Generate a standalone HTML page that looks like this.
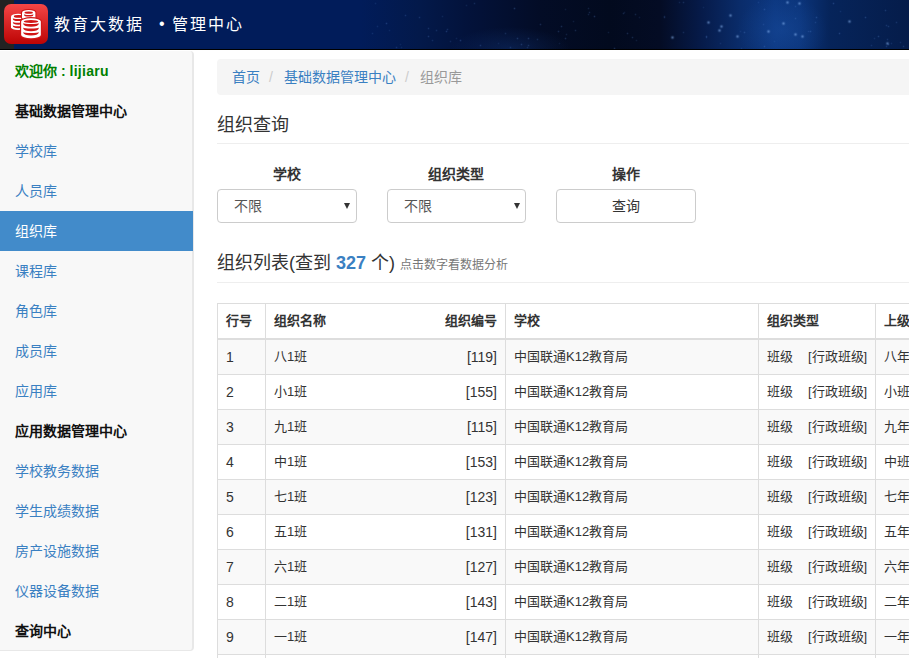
<!DOCTYPE html>
<html lang="zh-CN">
<head>
<meta charset="utf-8">
<style>
html,body{margin:0;padding:0;}
body{width:909px;height:658px;overflow:hidden;position:relative;background:#fff;font-family:"Liberation Sans",sans-serif;font-size:14px;color:#333;}
.abs{position:absolute;}
#hdr{left:0;top:0;width:909px;height:49px;overflow:hidden;background:radial-gradient(ellipse 45px 35px at 782px 30px,rgba(30,85,170,.35),rgba(30,85,170,0)),radial-gradient(ellipse 60px 22px at 510px 49px,rgba(20,60,130,.35),rgba(20,60,130,0)),linear-gradient(to right,#011c5a 0px,#011c5a 360px,#03194a 420px,#03123a 470px,#030c26 540px,#020a1e 610px,#040c24 660px,#061a48 700px,#0a2c6a 740px,#0c3780 775px,#0b347a 800px,#06245a 830px,#051c4a 909px);}
#stars{left:0;top:0;width:1px;height:1px;box-shadow:706px 36px 1.5px 0 rgba(110,160,240,0.53),878px 36px 1.5px 0 rgba(110,160,240,0.57),386px 23px 1.5px 0 rgba(110,160,240,0.58),720px 43px 1.5px 0 rgba(110,160,240,0.29),623px 13px 1.5px 0 rgba(110,160,240,0.44),679px 2px 1.5px 0 rgba(110,160,240,0.33),521px 44px 1.5px 0 rgba(110,160,240,0.52),456px 38px 1.5px 0 rgba(110,160,240,0.30),703px 7px 1.5px 0 rgba(110,160,240,0.25),840px 11px 1.5px 0 rgba(110,160,240,0.33),900px 42px 1.5px 0 rgba(110,160,240,0.35),888px 26px 1.5px 0 rgba(110,160,240,0.49),480px 45px 1.5px 0 rgba(110,160,240,0.49),891px 43px 1.5px 0 rgba(110,160,240,0.35),565px 9px 1.5px 0 rgba(110,160,240,0.30),405px 15px 1.5px 0 rgba(110,160,240,0.46),372px 33px 1.5px 0 rgba(110,160,240,0.37),537px 39px 1.5px 0 rgba(110,160,240,0.42),540px 24px 1.5px 0 rgba(110,160,240,0.50),401px 47px 1.5px 0 rgba(110,160,240,0.26),774px 41px 1.5px 0 rgba(110,160,240,0.26),795px 18px 1.5px 0 rgba(110,160,240,0.45),375px 3px 1.5px 0 rgba(110,160,240,0.31),885px 10px 1.5px 0 rgba(110,160,240,0.51),871px 45px 1.5px 0 rgba(110,160,240,0.37),561px 26px 1.5px 0 rgba(110,160,240,0.52),428px 36px 1.5px 0 rgba(110,160,240,0.53),833px 3px 1.5px 0 rgba(110,160,240,0.58),419px 17px 1.5px 0 rgba(110,160,240,0.46),865px 17px 1.5px 0 rgba(110,160,240,0.57),664px 16px 1.5px 0 rgba(110,160,240,0.36),466px 5px 1.5px 0 rgba(110,160,240,0.30),741px 48px 1.5px 0 rgba(110,160,240,0.31),396px 47px 1.5px 0 rgba(110,160,240,0.44),589px 12px 1.5px 0 rgba(110,160,240,0.46),815px 22px 1.5px 0 rgba(110,160,240,0.40),400px 44px 1.5px 0 rgba(110,160,240,0.26),636px 40px 1.5px 0 rgba(110,160,240,0.30),764px 46px 1.5px 0 rgba(110,160,240,0.47),795px 6px 1.5px 0 rgba(110,160,240,0.40),450px 41px 1.5px 0 rgba(110,160,240,0.35),614px 48px 1.5px 0 rgba(110,160,240,0.55),896px 22px 1.5px 0 rgba(110,160,240,0.42),763px 24px 1.5px 0 rgba(110,160,240,0.35),588px 8px 1.5px 0 rgba(110,160,240,0.38),903px 46px 1.5px 0 rgba(110,160,240,0.47),639px 17px 1.5px 0 rgba(110,160,240,0.28),517px 38px 1.5px 0 rgba(110,160,240,0.55),565px 38px 1.5px 0 rgba(110,160,240,0.52),744px 32px 1.5px 0 rgba(110,160,240,0.52),566px 34px 1.5px 0 rgba(110,160,240,0.35),632px 37px 1.5px 0 rgba(110,160,240,0.49),528px 45px 1.5px 0 rgba(110,160,240,0.48),683px 2px 1.5px 0 rgba(110,160,240,0.44),505px 33px 1.5px 0 rgba(110,160,240,0.41),810px 31px 1.5px 0 rgba(110,160,240,0.53),558px 31px 1.5px 0 rgba(110,160,240,0.51),816px 17px 1.5px 0 rgba(110,160,240,0.55),839px 33px 1.5px 0 rgba(110,160,240,0.59),886px 25px 1.5px 0 rgba(110,160,240,0.44),460px 40px 1.5px 0 rgba(110,160,240,0.58),627px 33px 1.5px 0 rgba(110,160,240,0.50),764px 9px 1.5px 0 rgba(110,160,240,0.52),683px 32px 1.5px 0 rgba(110,160,240,0.40),706px 37px 1.5px 0 rgba(110,160,240,0.47),758px 2px 1.5px 0 rgba(110,160,240,0.31),608px 32px 1.5px 0 rgba(110,160,240,0.33),740px 31px 1.5px 0 rgba(110,160,240,0.26),624px 12px 1.5px 0 rgba(110,160,240,0.27),442px 16px 1.5px 0 rgba(110,160,240,0.31),474px 3px 1.5px 0 rgba(110,160,240,0.41),575px 30px 1.5px 0 rgba(110,160,240,0.46),498px 43px 1.5px 0 rgba(110,160,240,0.25),588px 14px 1.5px 0 rgba(110,160,240,0.39),432px 40px 1.5px 0 rgba(110,160,240,0.38),389px 30px 1.5px 0 rgba(110,160,240,0.28),664px 17px 1.5px 0 rgba(110,160,240,0.45),887px 39px 1.5px 0 rgba(110,160,240,0.40),808px 31px 1.5px 0 rgba(110,160,240,0.38),447px 29px 1.5px 0 rgba(110,160,240,0.45),886px 46px 1.5px 0 rgba(110,160,240,0.46),559px 43px 1.5px 0 rgba(110,160,240,0.25),428px 28px 1.5px 0 rgba(110,160,240,0.47),446px 31px 1.5px 0 rgba(110,160,240,0.56),573px 21px 1.5px 0 rgba(110,160,240,0.33),527px 47px 1.5px 0 rgba(110,160,240,0.38),888px 44px 1.5px 0 rgba(110,160,240,0.46),510px 47px 1.5px 0 rgba(110,160,240,0.42),594px 16px 1.5px 0 rgba(110,160,240,0.59),635px 14px 1.5px 0 rgba(110,160,240,0.42),436px 30px 1.5px 0 rgba(110,160,240,0.41),528px 38px 1.5px 0 rgba(110,160,240,0.54),377px 26px 1.5px 0 rgba(110,160,240,0.35),874px 38px 1.5px 0 rgba(110,160,240,0.34),514px 8px 1.5px 0 rgba(110,160,240,0.60),719px 30px 1.5px .5px rgba(150,195,255,0.7),768px 31px 1.5px .5px rgba(150,195,255,0.7),802px 36px 1.5px .5px rgba(150,195,255,0.7),672px 37px 1.5px .5px rgba(150,195,255,0.7),721px 26px 1.5px .5px rgba(150,195,255,0.7),730px 15px 1.5px .5px rgba(150,195,255,0.7),783px 23px 1.5px .5px rgba(150,195,255,0.7),737px 36px 1.5px .5px rgba(150,195,255,0.7),799px 3px 1.5px .5px rgba(150,195,255,0.7),708px 22px 1.5px .5px rgba(150,195,255,0.7),887px 43px 1.5px .5px rgba(150,195,255,0.7),787px 2px 1.5px .5px rgba(150,195,255,0.7),849px 21px 1.5px .5px rgba(150,195,255,0.7),795px 34px 1.5px .5px rgba(150,195,255,0.7);}
#hdr .strip{left:0;top:0;width:14px;height:49px;background:#222;}
#hdrline{left:0;top:49px;width:909px;height:1px;background:#000;}
#logo{left:4px;top:4px;width:44px;height:40px;}
#dot{left:159px;top:12px;color:#fff;font-size:16px;line-height:24px;}
#title2{left:172px;top:13px;color:#fff;font-family:"Liberation Serif",serif;font-weight:300;font-size:16px;letter-spacing:2px;line-height:24px;white-space:nowrap;}
#title{left:54px;top:13px;color:#fff;font-family:"Liberation Serif",serif;font-weight:300;font-size:16px;letter-spacing:2px;line-height:24px;white-space:nowrap;}
#side{left:-1px;top:51px;width:193px;height:599px;background:#f8f8f8;border-right:2px solid #e8e8e8;border-bottom:1px solid #e8e8e8;border-radius:0 4px 4px 0;}
.si{position:absolute;left:0;width:193px;height:40px;line-height:40px;padding-left:16px;box-sizing:border-box;white-space:nowrap;color:#3a80c2;}
.si.b{color:#111;font-weight:bold;}
.si.g{color:#008000;font-weight:bold;}
.si.act{background:#428bca;color:#fff;width:194px;}
#bc{left:217px;top:59px;width:720px;height:36px;background:#f5f5f5;border-radius:4px;line-height:36px;padding-left:15px;box-sizing:border-box;white-space:nowrap;}
#bc a{color:#3a80c2;text-decoration:none;}
#bc .sep{color:#ccc;padding:0 11px 0 9px;}
#bc .cur{color:#999;}
#h1{left:217px;top:112px;font-size:18px;line-height:26px;white-space:nowrap;color:#333;}
.hr{position:absolute;left:217px;width:700px;height:1px;background:#eee;}
.lbl{position:absolute;top:164px;width:140px;text-align:center;font-weight:bold;line-height:20px;color:#333;}
.sel{position:absolute;top:189px;width:140px;height:34px;box-sizing:border-box;border:1px solid #ccc;border-radius:4px;background:#fff;}
.sel .t{position:absolute;left:16px;top:0;line-height:32px;color:#555;}
.sel .arr{position:absolute;left:126px;top:13px;width:0;height:0;border-left:3.5px solid transparent;border-right:3.5px solid transparent;border-top:6px solid #333;}
.btn{position:absolute;top:189px;width:140px;height:34px;box-sizing:border-box;border:1px solid #ccc;border-radius:4px;background:#fff;text-align:center;line-height:32px;color:#333;}
#h2{left:217px;top:250px;font-size:18px;line-height:26px;white-space:nowrap;color:#333;}
#h2 b{color:#3a80c2;}
#h2 small{font-size:12px;color:#777;}
table{position:absolute;left:217px;top:303px;border-collapse:collapse;table-layout:fixed;width:760px;}
td,th{border:1px solid #ddd;padding:0 8px;height:34px;line-height:20px;font-size:13px;white-space:nowrap;overflow:hidden;text-align:left;}
th{border-bottom:2px solid #ddd;font-weight:bold;color:#333;}
tbody tr:nth-child(odd) td{background:#f9f9f9;}
.r{float:right;}
td .r,tbody td:first-child{font-size:14px;}
.g2{margin-left:15px;}
</style>
</head>
<body>
<div id="hdr" class="abs">
  <div class="abs strip"></div><div id="stars" class="abs"></div>
</div>
<div id="hdrline" class="abs"></div>
<div id="logo" class="abs"><svg width="44" height="40" viewBox="0 0 44 40" style="position:absolute;left:0;top:0"><defs><linearGradient id="lg" x1="0" y1="0" x2="0" y2="1"><stop offset="0" stop-color="#f44646"/><stop offset="1" stop-color="#bd0404"/></linearGradient></defs><rect width="44" height="40" rx="7" fill="url(#lg)"/><path d="M7.00,12.50 A7.20,2.80 0 0 1 21.40,12.50 L21.40,23.20 A7.20,2.80 0 0 1 7.00,23.20 Z" fill="#fff"/><ellipse cx="14.60" cy="12.40" rx="4.80" ry="1.30" fill="#d11616"/><path d="M8.90,14.00 A5.30,1.05 0 0 0 19.50,14.00 L19.50,14.90 A5.30,2.05 0 0 1 8.90,14.90 Z" fill="#d11616"/><path d="M8.90,17.70 A5.30,1.05 0 0 0 19.50,17.70 L19.50,18.60 A5.30,2.05 0 0 1 8.90,18.60 Z" fill="#d11616"/><path d="M8.90,21.20 A5.30,1.05 0 0 0 19.50,21.20 L19.50,22.10 A5.30,2.05 0 0 1 8.90,22.10 Z" fill="#d11616"/><path d="M18.00,8.70 A6.70,2.60 0 0 1 31.40,8.70 L31.40,13.50 A6.70,2.60 0 0 1 18.00,13.50 Z" fill="#d11616" stroke="#d11616" stroke-width="2.2"/><path d="M18.00,8.70 A6.70,2.60 0 0 1 31.40,8.70 L31.40,13.50 A6.70,2.60 0 0 1 18.00,13.50 Z" fill="#fff"/><ellipse cx="24.70" cy="8.70" rx="4.20" ry="1.10" fill="#d11616"/><path d="M20.10,10.00 A4.60,1.10 0 0 0 29.30,10.00 L29.30,10.90 A4.60,1.60 0 0 1 20.10,10.90 Z" fill="#d11616"/><path d="M17.15,17.60 A9.85,3.30 0 0 1 36.85,17.60 L36.85,31.00 A9.85,3.30 0 0 1 17.15,31.00 Z" fill="#d11616" stroke="#d11616" stroke-width="2.4"/><path d="M17.15,17.60 A9.85,3.30 0 0 1 36.85,17.60 L36.85,31.00 A9.85,3.30 0 0 1 17.15,31.00 Z" fill="#fff"/><ellipse cx="27.00" cy="17.50" rx="7.30" ry="1.50" fill="#d11616"/><path d="M19.30,19.00 A7.70,1.10 0 0 0 34.70,19.00 L34.70,19.90 A7.70,2.80 0 0 1 19.30,19.90 Z" fill="#d11616"/><path d="M19.30,23.50 A7.70,1.10 0 0 0 34.70,23.50 L34.70,24.40 A7.70,2.80 0 0 1 19.30,24.40 Z" fill="#d11616"/><path d="M19.30,27.90 A7.70,1.10 0 0 0 34.70,27.90 L34.70,28.80 A7.70,2.80 0 0 1 19.30,28.80 Z" fill="#d11616"/></svg></div>
<div id="title" class="abs">教育大数据</div><div id="dot" class="abs">•</div><div id="title2" class="abs">管理中心</div>

<div id="side" class="abs">
  <div class="si g" style="top:0">欢迎你 : <span style="letter-spacing:.3px">lijiaru</span></div>
  <div class="si b" style="top:40px">基础数据管理中心</div>
  <div class="si" style="top:80px">学校库</div>
  <div class="si" style="top:120px">人员库</div>
  <div class="si act" style="top:160px">组织库</div>
  <div class="si" style="top:200px">课程库</div>
  <div class="si" style="top:240px">角色库</div>
  <div class="si" style="top:280px">成员库</div>
  <div class="si" style="top:320px">应用库</div>
  <div class="si b" style="top:360px">应用数据管理中心</div>
  <div class="si" style="top:400px">学校教务数据</div>
  <div class="si" style="top:440px">学生成绩数据</div>
  <div class="si" style="top:480px">房产设施数据</div>
  <div class="si" style="top:520px">仪器设备数据</div>
  <div class="si b" style="top:560px">查询中心</div>
</div>

<div id="bc" class="abs"><a>首页</a><span class="sep">/</span><a>基础数据管理中心</a><span class="sep">/</span><span class="cur">组织库</span></div>
<div id="h1" class="abs">组织查询</div>
<div class="hr" style="top:143px"></div>

<div class="lbl" style="left:217px">学校</div>
<div class="lbl" style="left:386px">组织类型</div>
<div class="lbl" style="left:556px">操作</div>
<div class="sel" style="left:217px"><span class="t">不限</span><span class="arr"></span></div>
<div class="sel" style="left:387px;width:139px"><span class="t">不限</span><span class="arr"></span></div>
<div class="btn" style="left:556px">查询</div>

<div id="h2" class="abs">组织列表(查到 <b>327</b> 个) <small>点击数字看数据分析</small></div>
<div class="hr" style="top:282px"></div>

<table>
<colgroup><col style="width:48px"><col style="width:240px"><col style="width:253px"><col style="width:117px"><col style="width:102px"></colgroup>
<thead><tr><th>行号</th><th>组织名称<span class="r">组织编号</span></th><th>学校</th><th>组织类型</th><th>上级组织</th></tr></thead>
<tbody>
<tr><td>1</td><td>八1班<span class="r">[119]</span></td><td>中国联通K12教育局</td><td>班级<span class="g2">[行政班级]</span></td><td>八年级</td></tr>
<tr><td>2</td><td>小1班<span class="r">[155]</span></td><td>中国联通K12教育局</td><td>班级<span class="g2">[行政班级]</span></td><td>小班</td></tr>
<tr><td>3</td><td>九1班<span class="r">[115]</span></td><td>中国联通K12教育局</td><td>班级<span class="g2">[行政班级]</span></td><td>九年级</td></tr>
<tr><td>4</td><td>中1班<span class="r">[153]</span></td><td>中国联通K12教育局</td><td>班级<span class="g2">[行政班级]</span></td><td>中班</td></tr>
<tr><td>5</td><td>七1班<span class="r">[123]</span></td><td>中国联通K12教育局</td><td>班级<span class="g2">[行政班级]</span></td><td>七年级</td></tr>
<tr><td>6</td><td>五1班<span class="r">[131]</span></td><td>中国联通K12教育局</td><td>班级<span class="g2">[行政班级]</span></td><td>五年级</td></tr>
<tr><td>7</td><td>六1班<span class="r">[127]</span></td><td>中国联通K12教育局</td><td>班级<span class="g2">[行政班级]</span></td><td>六年级</td></tr>
<tr><td>8</td><td>二1班<span class="r">[143]</span></td><td>中国联通K12教育局</td><td>班级<span class="g2">[行政班级]</span></td><td>二年级</td></tr>
<tr><td>9</td><td>一1班<span class="r">[147]</span></td><td>中国联通K12教育局</td><td>班级<span class="g2">[行政班级]</span></td><td>一年级</td></tr>
<tr><td>10</td><td>三1班<span class="r">[139]</span></td><td>中国联通K12教育局</td><td>班级<span class="g2">[行政班级]</span></td><td>三年级</td></tr>
</tbody>
</table>
</body>
</html>
